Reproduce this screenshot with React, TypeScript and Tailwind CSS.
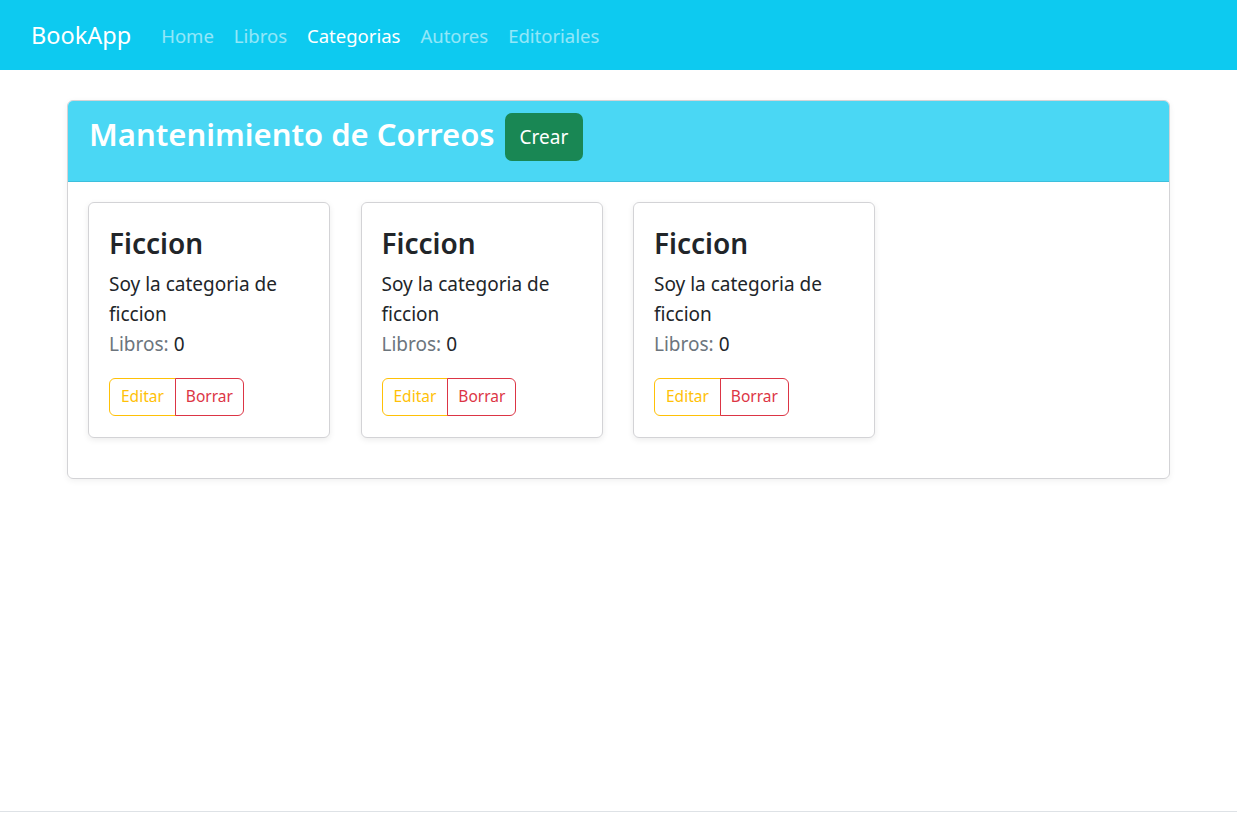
import React from "react";

const font = { fontFamily: '"Segoe UI", "Noto Sans", "Open Sans", sans-serif' };

type Categoria = { nombre: string; descripcion: string; libros: number };

const categorias: Categoria[] = [
  { nombre: "Ficcion", descripcion: "Soy la categoria de ficcion", libros: 0 },
  { nombre: "Ficcion", descripcion: "Soy la categoria de ficcion", libros: 0 },
  { nombre: "Ficcion", descripcion: "Soy la categoria de ficcion", libros: 0 },
];

function NavBar() {
  const links = ["Home", "Libros", "Categorias", "Autores", "Editoriales"];
  return (
    <nav className="flex h-[70px] items-center bg-[#0dcaf0] px-[31px] pt-[2px]">
      <span className="mr-[30px] text-[23.5px] text-white">BookApp</span>
      <div className="flex gap-[20px] text-[18.5px]">
        {links.map((l) => (
          <a
            key={l}
            className={l === "Categorias" ? "text-white" : "text-white/55"}
          >
            {l}
          </a>
        ))}
      </div>
    </nav>
  );
}

function CategoriaCard({ c }: { c: Categoria }) {
  return (
    <div className="w-[242px] rounded-[6px] border border-[#d3d3d6] bg-white px-[20px] pt-[22px] pb-[21px] shadow-[0_2px_6px_rgba(0,0,0,0.08)]">
      <h5 className="text-[28px] leading-[36px] font-semibold text-[#212529]">
        {c.nombre}
      </h5>
      <p className="mt-[8px] text-[19px] leading-[30px] text-[#212529]">
        {c.descripcion}
      </p>
      <p className="text-[19px] leading-[30px] text-[#212529]">
        <span className="text-[#6c757d]">Libros:</span> {c.libros}
      </p>
      <div className="mt-[19px] flex">
        <button className="h-[38px] rounded-l-[6px] border border-[#ffc107] px-[11px] text-[15.5px] text-[#ffc107]">
          Editar
        </button>
        <button className="-ml-px h-[38px] rounded-r-[6px] border border-[#dc3545] px-[10px] text-[15.5px] text-[#dc3545]">
          Borrar
        </button>
      </div>
    </div>
  );
}

export default function App() {
  return (
    <div className="min-h-[833px] bg-white" style={font}>
      <div className="flex h-[812px] flex-col border-b border-[#dee2e6]">
        <NavBar />
        <main className="px-[67px] pt-[30px]">
          <div className="w-[1103px] overflow-hidden rounded-[6px] border border-[#d3d3d6] shadow-[0_2px_6px_rgba(0,0,0,0.06)]">
            <div className="flex items-start gap-[10px] border-b border-[#3dbfdc] bg-[#4ad7f4] px-[21px] pt-[12px] pb-[20px]">
              <h2 className="mt-[1px] text-[31px] leading-[40px] font-semibold text-white">
                Mantenimiento de Correos
              </h2>
              <button className="h-[48px] rounded-[7px] bg-[#198754] px-[15px] text-[19px] text-white">
                Crear
              </button>
            </div>
            <div className="flex gap-[30.5px] px-[20px] pt-[20px] pb-[40px]">
              {categorias.map((c, i) => (
                <CategoriaCard key={i} c={c} />
              ))}
            </div>
          </div>
        </main>
      </div>
    </div>
  );
}
